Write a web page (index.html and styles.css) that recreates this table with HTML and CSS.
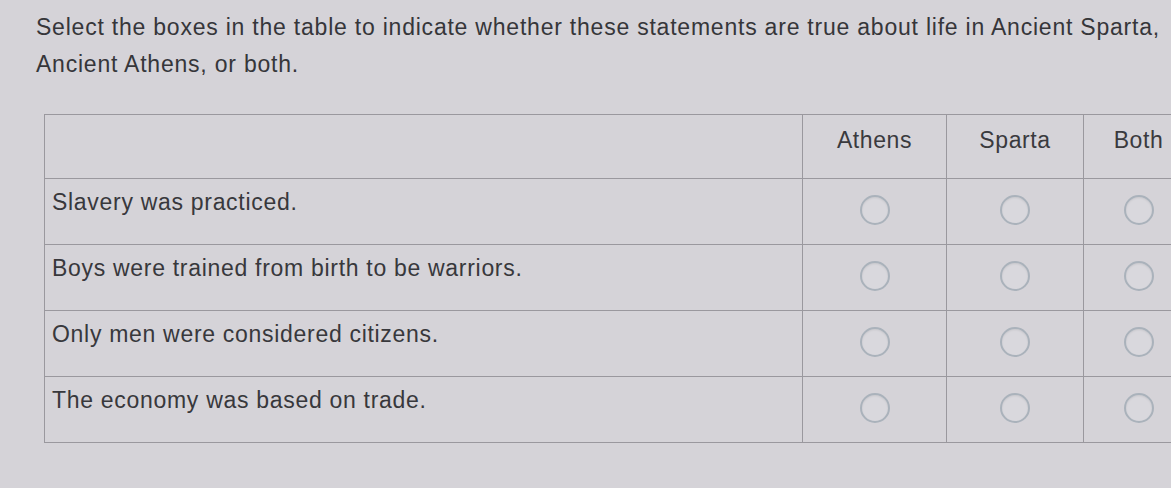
FILE: index.html
```html
<!DOCTYPE html>
<html>
<head>
<meta charset="utf-8">
<link rel="stylesheet" href="styles.css">
</head>
<body>
<div class="page">
  <p class="prompt">Select the boxes in the table to indicate whether these statements are true about life in Ancient Sparta, Ancient Athens, or both.</p>
  <table class="grid">
    <colgroup>
      <col class="c-stmt">
      <col class="c-a">
      <col class="c-s">
      <col class="c-b">
    </colgroup>
    <thead>
      <tr class="head">
        <th></th>
        <th>Athens</th>
        <th>Sparta</th>
        <th>Both</th>
      </tr>
    </thead>
    <tbody>
      <tr>
        <td class="stmt">Slavery was practiced.</td>
        <td class="opt"><span class="radio"></span></td>
        <td class="opt"><span class="radio"></span></td>
        <td class="opt"><span class="radio"></span></td>
      </tr>
      <tr>
        <td class="stmt">Boys were trained from birth to be warriors.</td>
        <td class="opt"><span class="radio"></span></td>
        <td class="opt"><span class="radio"></span></td>
        <td class="opt"><span class="radio"></span></td>
      </tr>
      <tr>
        <td class="stmt">Only men were considered citizens.</td>
        <td class="opt"><span class="radio"></span></td>
        <td class="opt"><span class="radio"></span></td>
        <td class="opt"><span class="radio"></span></td>
      </tr>
      <tr>
        <td class="stmt">The economy was based on trade.</td>
        <td class="opt"><span class="radio"></span></td>
        <td class="opt"><span class="radio"></span></td>
        <td class="opt"><span class="radio"></span></td>
      </tr>
    </tbody>
  </table>
</div>
</body>
</html>
```

FILE: styles.css
```css
html, body {
  margin: 0;
  padding: 0;
  background: #d5d3d8;
  overflow: hidden;
}

body {
  width: 1171px;
  height: 488px;
  font-family: "Liberation Sans", Arial, sans-serif;
  color: #38383c;
}

.page {
  padding: 9px 0 0 36px;
}

.prompt {
  margin: 0;
  width: 1133px;
  font-size: 23px;
  line-height: 37px;
  letter-spacing: 0.78px;
  color: #36363a;
}

.grid {
  margin: 31px 0 0 8px;
  border-collapse: collapse;
  table-layout: fixed;
  width: 1149px;
  border: 1px solid #8f8d93;
  border-right: none;
}

.c-stmt { width: 758px; }
.c-a { width: 144px; }
.c-s { width: 137px; }
.c-b { width: 110px; }

.grid th,
.grid td {
  border: 1px solid #9a989e;
  padding: 0;
}

.head th {
  height: 51px;
  vertical-align: top;
  padding-top: 12px;
  font-weight: normal;
  font-size: 23px;
  line-height: 26px;
  letter-spacing: 0.6px;
  text-align: center;
  color: #3a3a3e;
}

.grid tbody tr {
  height: 66px;
}

.stmt {
  vertical-align: top;
  padding: 9px 0 0 7px !important;
  font-size: 23px;
  line-height: 28px;
  letter-spacing: 0.7px;
  color: #38383c;
}

.opt {
  text-align: center;
  vertical-align: top;
  padding-top: 16px !important;
}

.radio {
  display: inline-block;
  width: 26px;
  height: 26px;
  border: 2px solid #aab2bb;
  border-radius: 50%;
  background: #d9d8dd;
  box-shadow: inset 0 1px 2px rgba(0,0,0,0.08);
}
```
